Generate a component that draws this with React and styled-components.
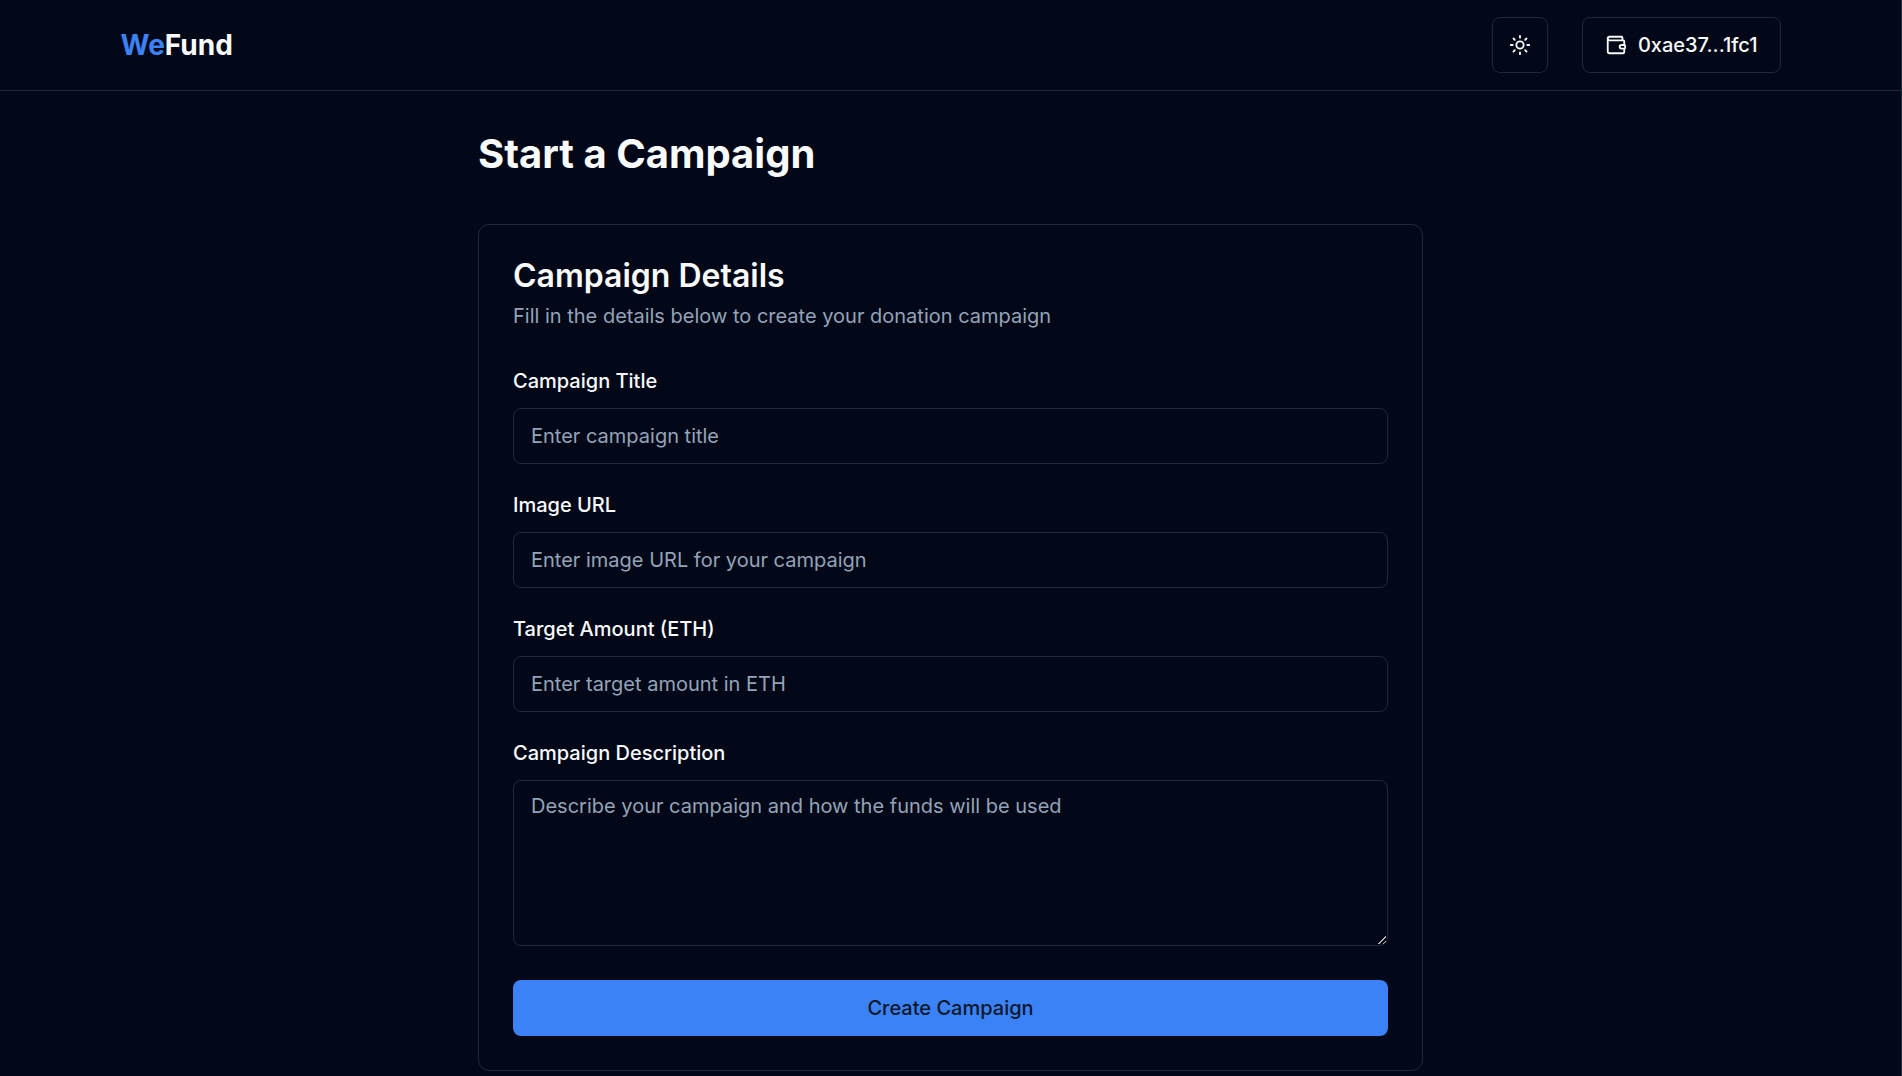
import React, { useState } from 'react';
import styled, { createGlobalStyle, css } from 'styled-components';
import { Sun, Wallet } from 'lucide-react';

const colors = {
  background: '#020817',
  foreground: '#f8fafc',
  muted: '#94a3b8',
  border: '#1e293b',
  primary: '#3b82f6',
  primaryText: '#0f172a',
};

const GlobalStyle = createGlobalStyle`
  *,
  *::before,
  *::after {
    box-sizing: border-box;
  }

  body {
    margin: 0;
    background: ${colors.background};
    color: ${colors.foreground};
    font-family: Inter, sans-serif;
    font-size: 20px;
    line-height: 28px;
  }
`;

const Page = styled.div`
  min-height: 100vh;
  border-right: 1px solid ${colors.border};
`;

const Header = styled.header`
  border-bottom: 1px solid ${colors.border};
`;

const HeaderInner = styled.div`
  display: flex;
  align-items: center;
  justify-content: space-between;
  max-width: 1716px;
  margin: 0 auto;
  padding: 17px 28px;
`;

const Logo = styled.a`
  color: ${colors.foreground};
  font-size: 28px;
  font-weight: 700;
  line-height: 40px;
  text-decoration: none;

  span {
    color: ${colors.primary};
  }
`;

const HeaderActions = styled.div`
  display: flex;
  align-items: center;
  gap: 34px;
`;

const Button = styled.button`
  display: inline-flex;
  align-items: center;
  justify-content: center;
  gap: 11px;
  height: 56px;
  border: none;
  border-radius: 8px;
  font-family: inherit;
  font-size: 20px;
  font-weight: 500;
  line-height: 28px;
  cursor: pointer;
`;

const OutlineButton = styled(Button)`
  padding: 0 ${(props) => (props.$icon ? '0' : '22px')};
  width: ${(props) => (props.$icon ? '56px' : 'auto')};
  border: 1px solid ${colors.border};
  background: ${colors.background};
  color: ${colors.foreground};
`;

const SubmitButton = styled(Button)`
  width: 100%;
  margin-top: 7px;
  background: ${colors.primary};
  color: ${colors.primaryText};
`;

const Main = styled.main`
  max-width: 945px;
  margin: 0 auto;
  padding: 38px 0 6px;
`;

const PageTitle = styled.h1`
  margin: 0 0 45px;
  font-size: 40px;
  font-weight: 700;
  line-height: 50px;
`;

const Card = styled.section`
  padding: 34px;
  border: 1px solid ${colors.border};
  border-radius: 11px;
`;

const CardHeader = styled.div`
  margin-bottom: 37px;
`;

const CardTitle = styled.h2`
  margin: 0 0 9px;
  font-size: 32px;
  font-weight: 600;
  line-height: 34px;
`;

const CardDescription = styled.p`
  margin: 0;
  color: ${colors.muted};
`;

const Form = styled.form`
  display: flex;
  flex-direction: column;
  gap: 27px;
`;

const Field = styled.div`
  display: flex;
  flex-direction: column;
  gap: 13px;
`;

const Label = styled.label`
  font-weight: 500;
`;

const controlStyle = css`
  display: block;
  width: 100%;
  border: 1px solid ${colors.border};
  border-radius: 8px;
  background: ${colors.background};
  color: ${colors.foreground};
  font-family: inherit;
  font-size: 20px;
  line-height: 28px;

  &::placeholder {
    color: ${colors.muted};
    opacity: 1;
  }
`;

const Input = styled.input`
  ${controlStyle}
  height: 56px;
  padding: 0 17px;
`;

const Textarea = styled.textarea`
  ${controlStyle}
  height: 166px;
  padding: 11px 17px;
  resize: vertical;

  &::-webkit-resizer {
    background: linear-gradient(
        135deg,
        transparent 14px,
        #b4b4b4 14px,
        #b4b4b4 15px,
        transparent 15px,
        transparent 17px,
        #b4b4b4 17px,
        #b4b4b4 18px,
        transparent 18px
      )
      0 0 / 14px 14px no-repeat;
  }
`;

const fields = [
  { name: 'title', label: 'Campaign Title', placeholder: 'Enter campaign title' },
  { name: 'image', label: 'Image URL', placeholder: 'Enter image URL for your campaign' },
  { name: 'target', label: 'Target Amount (ETH)', placeholder: 'Enter target amount in ETH' },
];

const App = () => {
  const [values, setValues] = useState({
    title: '',
    image: '',
    target: '',
    description: '',
  });

  const onChange = (e) => {
    setValues({ ...values, [e.target.name]: e.target.value });
  };

  const onSubmit = (e) => {
    e.preventDefault();
  };

  return (
    <>
      <GlobalStyle />
      <Page>
        <Header>
          <HeaderInner>
            <Logo href='#'>
              <span>We</span>Fund
            </Logo>
            <HeaderActions>
              <OutlineButton type='button' $icon aria-label='Toggle theme'>
                <Sun size={22} />
              </OutlineButton>
              <OutlineButton type='button'>
                <Wallet size={22} />
                0xae37...1fc1
              </OutlineButton>
            </HeaderActions>
          </HeaderInner>
        </Header>
        <Main>
          <PageTitle>Start a Campaign</PageTitle>
          <Card>
            <CardHeader>
              <CardTitle>Campaign Details</CardTitle>
              <CardDescription>
                Fill in the details below to create your donation campaign
              </CardDescription>
            </CardHeader>
            <Form onSubmit={onSubmit}>
              {fields.map((field) => (
                <Field key={field.name}>
                  <Label htmlFor={field.name}>{field.label}</Label>
                  <Input
                    id={field.name}
                    name={field.name}
                    placeholder={field.placeholder}
                    value={values[field.name]}
                    onChange={onChange}
                  />
                </Field>
              ))}
              <Field>
                <Label htmlFor='description'>Campaign Description</Label>
                <Textarea
                  id='description'
                  name='description'
                  placeholder='Describe your campaign and how the funds will be used'
                  value={values.description}
                  onChange={onChange}
                />
              </Field>
              <SubmitButton type='submit'>Create Campaign</SubmitButton>
            </Form>
          </Card>
        </Main>
      </Page>
    </>
  );
};

export default App;
